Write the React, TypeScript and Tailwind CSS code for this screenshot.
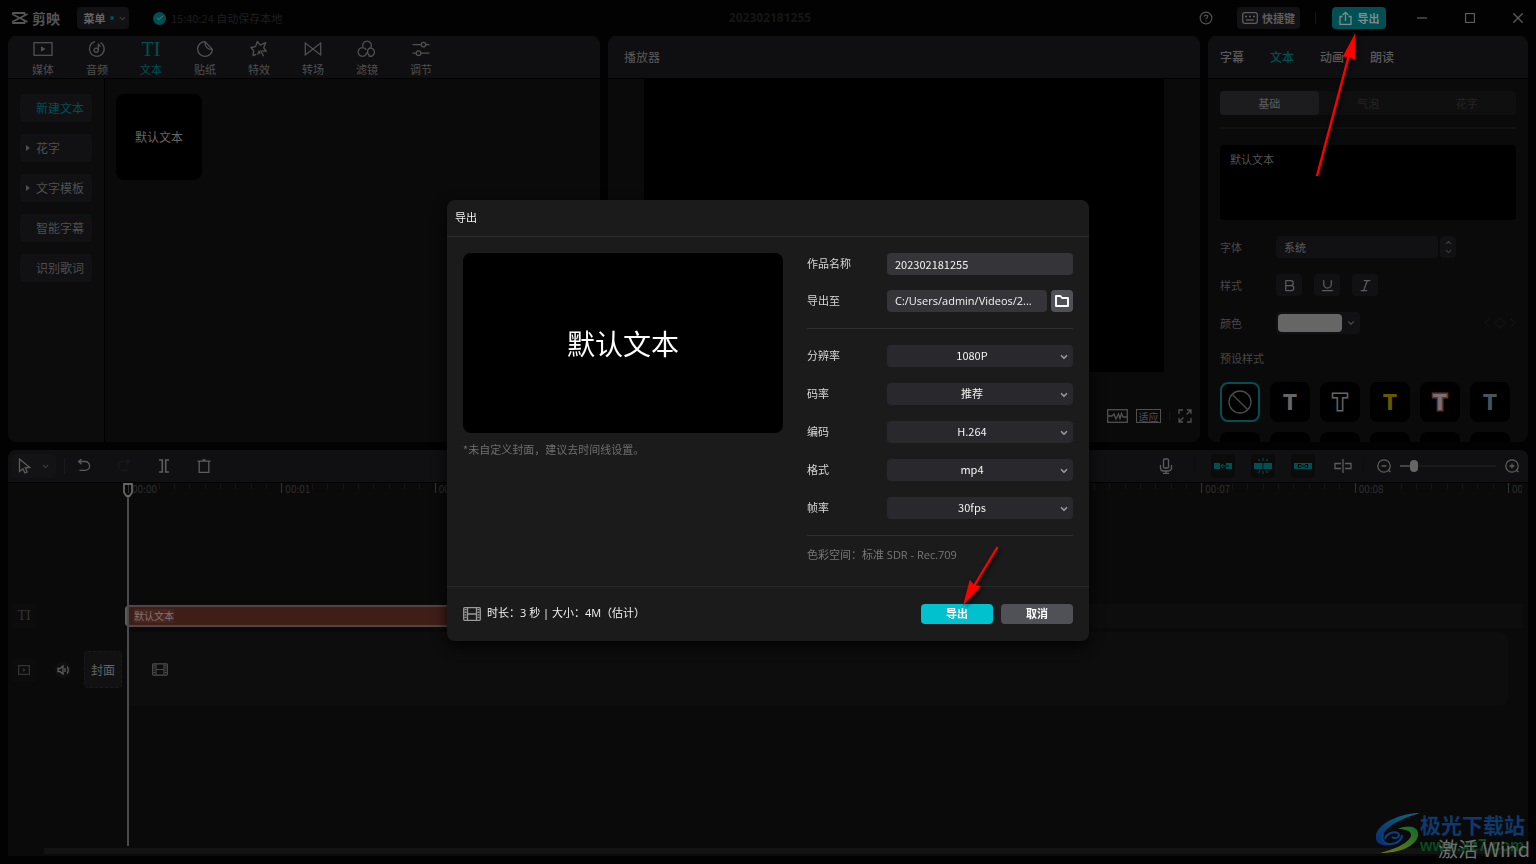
import type { ReactNode } from "react";
import { Bold, Check, ChevronDown, ChevronUp, CircleHelp, Italic, Underline } from "lucide-react";
import { clsx } from "clsx";

const SECOND_WIDTH = 460 / 3;
const CLIP_SECONDS = 3;

const mediaTabs = [
  { label: "媒体", icon: <MediaIcon /> },
  { label: "音频", icon: <AudioIcon /> },
  { label: "文本", icon: <TextIcon />, active: true },
  { label: "贴纸", icon: <StickerIcon /> },
  { label: "特效", icon: <EffectIcon /> },
  { label: "转场", icon: <TransitionIcon /> },
  { label: "滤镜", icon: <FilterIcon /> },
  { label: "调节", icon: <AdjustIcon /> },
];

const textCategories = [
  { label: "新建文本", active: true },
  { label: "花字", arrow: true },
  { label: "文字模板", arrow: true },
  { label: "智能字幕" },
  { label: "识别歌词" },
];

const exportOptions = [
  { id: "resolution", label: "分辨率", value: "1080P" },
  { id: "bitrate", label: "码率", value: "推荐" },
  { id: "codec", label: "编码", value: "H.264" },
  { id: "format", label: "格式", value: "mp4" },
  { id: "fps", label: "帧率", value: "30fps" },
];

const presets = [
  "text-[#666]",
  "text-black [-webkit-text-stroke:3px_#666] [paint-order:stroke_fill]",
  "text-[#665800]",
  "text-[#737373] [-webkit-text-stroke:3px_#63302c] [paint-order:stroke_fill]",
  "text-[#46545f]",
];

/* ---------- icons ---------- */

function Icon({ w = 20, h = 18, children }: { w?: number; h?: number; children: ReactNode }) {
  return (
    <svg
      width={w}
      height={h}
      viewBox={`0 0 ${w} ${h}`}
      fill="none"
      stroke="currentColor"
      strokeWidth="1.3"
      aria-hidden="true"
      className="shrink-0"
    >
      {children}
    </svg>
  );
}

function MediaIcon() {
  return (
    <Icon>
      <rect x="1" y="2.7" width="18" height="12.6" />
      <path d="M8 6.2v5.6l4.5-2.8z" fill="currentColor" stroke="none" />
    </Icon>
  );
}

function AudioIcon() {
  return (
    <Icon>
      <path d="M8 1.7A7.4 7.4 0 1 0 13.5 2.5" />
      <circle cx="9.2" cy="10.2" r="2.1" />
      <path d="M11.3 10.2V3.5c.3 1.6 1 2.4 2.4 2.9" />
    </Icon>
  );
}

function TextIcon() {
  return <span className="font-['Liberation_Serif',serif] text-xl leading-[18px]">TI</span>;
}

function StickerIcon() {
  return (
    <Icon>
      <path d="M10 1.6A7.4 7.4 0 1 0 17.4 9.6L10 1.6zM10 1.6c-.3 4.6 2.3 7.6 7.4 8" />
    </Icon>
  );
}

function EffectIcon() {
  return (
    <Icon>
      <path
        d="M7.2 14.3 4 15.6l.7-4.8L2 7.5l4.6-.9L8.3 1.5l2.9 3.7 5.5-2.5-2 5.1 2.6 3.4-4-.2M8.5 14.5l1.8-3.8M11.6 10.2l3 6M10 10.6l1 3.4"
        strokeLinejoin="round"
      />
    </Icon>
  );
}

function TransitionIcon() {
  return (
    <Icon>
      <path d="M2.3 3v12L17.7 3v12z" />
    </Icon>
  );
}

function FilterIcon() {
  return (
    <Icon>
      <path d="M6.1 7.6A4.4 4.4 0 1 1 14 7.4M9.7 12.7a4.3 4.3 0 1 1-3.2-4.9c1.2.3 2.1 1 2.7 2M13 8a4.2 4.2 0 1 1-1.5 8M13.5 7.8c-1.6.3-2.8 1.5-3 3.5-.1 2 1 3.7 2.6 4.3" />
    </Icon>
  );
}

function AdjustIcon() {
  return (
    <Icon>
      <path d="M1.5 4.6H10M15 4.6h3.5M1.5 13.2H5M10 13.2h8.5" />
      <circle cx="12.5" cy="4.6" r="2.3" />
      <circle cx="7.5" cy="13.2" r="2.3" />
    </Icon>
  );
}

function Logo() {
  return (
    <svg
      width="16"
      height="12"
      viewBox="0 0 16 12"
      fill="none"
      stroke="currentColor"
      strokeWidth="1.8"
      strokeLinejoin="round"
      aria-hidden="true"
    >
      <path d="M12.6 3.400V1H1v1.500L15.600 10" />
      <path d="M12.600 8.600V11H1V9.500L15.600 2" />
    </svg>
  );
}

function FilmIcon({ w = 18, h = 14 }: { w?: number; h?: number }) {
  return (
    <svg width={w} height={h} viewBox="0 0 18 14" fill="none" stroke="currentColor" aria-hidden="true">
      <rect x=".7" y=".7" width="16.6" height="12.6" rx="1" strokeWidth="1.3" />
      <path d="M4.5 1v12M13.5 1v12M4.5 7h9" strokeWidth="1.3" />
      <path d="M2.5 2v10M15.5 2v10" strokeWidth="2" strokeDasharray="1.3 1.3" />
    </svg>
  );
}

function TrackLinkIcon({ kind }: { kind: "main" | "snap" | "link" }) {
  return (
    <svg width="20" height="18" viewBox="0 0 20 18" fill="none" stroke="currentColor" aria-hidden="true">
      {kind === "main" && (
        <>
          <path d="M1 6h6v6H1zM13 6h6v6h-6z" fill="currentColor" stroke="none" />
          <path d="M10 7 8.2 9l1.8 2M10 9h3" strokeWidth="1.2" />
          <path d="M13 9h3" stroke="#0b0b0c" strokeWidth="1.2" />
        </>
      )}
      {kind === "snap" && (
        <>
          <path d="M1 6h8v6H1zM11 6h8v6h-8z" fill="currentColor" stroke="none" />
          <path d="M10 6v6M10 1v3M10 14v3M5.5 2l1.3 2.3M14.5 2l-1.3 2.3M5.5 16l1.3-2.3M14.5 16l-1.3-2.3" strokeWidth="1.1" />
        </>
      )}
      {kind === "link" && (
        <>
          <path d="M1 6h18v6H1z" fill="currentColor" stroke="none" />
          <path d="M8 7.5H5.5v3H8M12 7.5h2.5v3H12M7.5 9h5" stroke="#08090a" strokeWidth="1.2" />
        </>
      )}
    </svg>
  );
}

/* ---------- title bar ---------- */

function TitleBar() {
  return (
    <header className="grid h-9 shrink-0 grid-cols-[1fr_auto_1fr] items-center">
      <div className="flex items-center pl-3">
        <div className="flex items-center gap-1 text-[#545454]">
          <Logo />
          <span className="text-sm leading-5 font-bold">剪映</span>
        </div>
        <button
          type="button"
          className="ml-[17px] flex h-[22px] w-[52px] items-center justify-center gap-1 rounded bg-[#121214] pl-1 text-[11px] font-bold text-[#666]"
        >
          菜单
          <span className="size-1 shrink-0 rounded-full bg-[#004f53]" />
          <ChevronDown size={9} strokeWidth={3} className="shrink-0 text-[#3c3c3c]" />
        </button>
        <span className="ml-6 flex size-[13px] items-center justify-center rounded-full bg-[#004f53]">
          <Check size={8} strokeWidth={3} className="text-[#777]" />
        </span>
        <span className="ml-[5px] text-[11px] text-[#1f1f1f]">15:40:24 自动保存本地</span>
      </div>

      <h1 className="pl-1 font-['Open_Sans',sans-serif] text-xs font-bold text-[#151515]">202302181255</h1>

      <div className="flex items-center justify-end pr-[13px]">
        <button type="button" aria-label="帮助" className="text-[#555]">
          <CircleHelp size={14} strokeWidth={2} />
        </button>
        <button
          type="button"
          className="ml-6 flex h-[22px] w-[63px] items-center justify-center gap-1 rounded bg-[#121214] text-[11px] font-bold text-[#5c5c5c]"
        >
          <Icon w={16} h={12}>
            <rect x=".7" y=".7" width="14.6" height="10.6" rx="2" />
            <path d="M3 4.5h10" strokeDasharray="2 2" />
            <path d="M4 8h8" />
          </Icon>
          快捷键
        </button>
        <span className="ml-[15px] h-3 w-px bg-[#151515]" />
        <div className="relative ml-4">
          <button
            type="button"
            className="flex h-[22px] w-[54px] items-center justify-center gap-1.5 rounded bg-[#004f53] text-[11px] font-bold text-[#7c8c8c]"
          >
            <Icon w={13} h={14}>
              <path d="M3.5 5.5H1v7.8h11V5.5H9.5M6.5 10V1.5M3.5 4l3-2.7 3 2.7" />
            </Icon>
            导出
          </button>
          {/* pointer to the export button */}
          <svg
            width="56"
            height="150"
            viewBox="0 0 56 150"
            aria-hidden="true"
            className="pointer-events-none absolute top-6 right-6 z-50 drop-shadow-[2px_2px_2px_rgba(0,0,0,0.7)]"
          >
            <path d="M11 145 43 24" stroke="#f00" strokeWidth="2.4" />
            <path d="M49.300 2 49 29 43 26 36.700 25.700z" fill="#f00" />
          </svg>
        </div>
        <div className="ml-[31px] flex items-center gap-[38px] text-[#5c5c5c]">
          <button type="button" aria-label="最小化">
            <Icon w={10} h={10}>
              <path d="M0 5h10" />
            </Icon>
          </button>
          <button type="button" aria-label="最大化">
            <Icon w={10} h={10}>
              <rect x=".5" y=".5" width="9" height="9" />
            </Icon>
          </button>
          <button type="button" aria-label="关闭">
            <Icon w={10} h={10}>
              <path d="m.3.3 9.400 9.400M9.700.3.3 9.700" />
            </Icon>
          </button>
        </div>
      </div>
    </header>
  );
}

/* ---------- upper panels ---------- */

function MediaPanel() {
  return (
    <section className="flex min-w-0 flex-1 flex-col overflow-hidden rounded-lg bg-[#0a0a0a]">
      <nav className="flex h-[43px] shrink-0 border-b border-black bg-[#0f0f11] pl-2">
        {mediaTabs.map((tab) => (
          <button
            key={tab.label}
            type="button"
            className={clsx(
              "flex w-[54px] flex-col items-center gap-[3px] pt-1 text-[11px] leading-4",
              tab.active ? "text-[#004f53]" : "text-[#505050]",
            )}
          >
            {tab.icon}
            {tab.label}
          </button>
        ))}
      </nav>
      <div className="flex flex-1">
        <aside className="flex w-[97px] flex-col gap-3 border-r border-black bg-[#0c0c0d] px-3 pt-[15px]">
          {textCategories.map((item) => (
            <button
              key={item.label}
              type="button"
              className={clsx(
                "flex h-7 w-[72px] items-center rounded bg-[#111113] pl-1.5 text-xs",
                item.active ? "text-[#004f53]" : "text-[#4f4f4f]",
              )}
            >
              <span className="w-2.5">
                {item.arrow && (
                  <svg width="4" height="6" viewBox="0 0 4 6" fill="currentColor" aria-hidden="true">
                    <path d="M0 0v6l4-3z" />
                  </svg>
                )}
              </span>
              {item.label}
            </button>
          ))}
        </aside>
        <div className="flex-1 px-[11px] pt-[15px]">
          <button type="button" className="size-[86px] rounded-lg bg-black text-xs text-[#666]">
            默认文本
          </button>
        </div>
      </div>
    </section>
  );
}

function PlayerPanel() {
  return (
    <section className="flex min-w-0 flex-1 flex-col overflow-hidden rounded-lg bg-[#0a0a0a]">
      <h2 className="flex h-[43px] shrink-0 items-center border-b border-black bg-[#0f0f11] px-4 text-xs text-[#5a5a5a]">
        播放器
      </h2>
      <div className="mx-9 aspect-video bg-black" />
      <div className="mt-auto flex h-[52px] items-center justify-end gap-2 pr-2 text-[#505050]">
        <button type="button" aria-label="示波器">
          <Icon w={21} h={14}>
            <rect x=".7" y=".7" width="19.6" height="12.6" />
            <path d="M1 7h4l2-2 2 5 2.500-5 1.500 4.500 1.500-5 1.500 3.500H20" />
          </Icon>
        </button>
        <button
          type="button"
          className="flex h-3.5 w-[25px] items-center justify-center border border-[#505050] text-[10px]"
        >
          适应
        </button>
        <span className="h-2 w-px bg-[#151515]" />
        <button type="button" aria-label="全屏">
          <Icon w={14} h={14}>
            <path d="M5 1H1v4M9 1h4v4M5 13H1V9M9 13h4V9M8.500 5.500 12.500 1.500M5.500 8.500 1.500 12.500" />
          </Icon>
        </button>
      </div>
    </section>
  );
}

function Row({ label, id, children }: { label: string; id?: string; children: ReactNode }) {
  return (
    <div className="flex h-[22px] shrink-0 items-center">
      <label htmlFor={id} className="w-14 text-[11px] text-[#484848]">
        {label}
      </label>
      {children}
    </div>
  );
}

function InspectorPanel() {
  const styleButton = "flex h-[22px] w-[26px] items-center justify-center rounded bg-[#111113] text-[#5c5c5c]";

  return (
    <section className="flex w-80 shrink-0 flex-col overflow-hidden rounded-lg bg-[#0a0a0a]">
      <nav className="flex h-[43px] shrink-0 items-center gap-[26px] border-b border-black bg-[#0f0f11] px-3 text-xs font-medium text-[#5a5a5a]">
        <button type="button">字幕</button>
        <button type="button" className="text-[#004f53]">
          文本
        </button>
        <button type="button">动画</button>
        <button type="button">朗读</button>
      </nav>
      <div className="flex min-h-0 flex-1 flex-col gap-4 overflow-hidden px-3 pt-3">
        <div className="flex shrink-0 flex-col gap-3 border-b-2 border-[#101011] pb-3">
          <div className="grid h-6 grid-cols-3 rounded bg-[#0f0f10] text-[11px] text-[#252525]">
            <button type="button" className="rounded bg-[#1c1c1e] text-[#5c5c5c]">
              基础
            </button>
            <button type="button">气泡</button>
            <button type="button">花字</button>
          </div>
        </div>
        <textarea
          aria-label="文本内容"
          defaultValue="默认文本"
          className="h-[75px] shrink-0 resize-none rounded bg-black px-2.5 py-1.5 text-[11px] leading-4 text-[#555] outline-none"
        />
        <Row label="字体" id="font">
          <select
            id="font"
            className="h-[22px] w-[162px] appearance-none rounded bg-[#111113] px-2 text-[11px] text-[#5c5c5c]"
          >
            <option>系统</option>
          </select>
          <div className="ml-0.5 flex h-[22px] w-4 flex-col items-center justify-between rounded bg-[#111113] py-0.5 text-[#3c3c3c]">
            <ChevronUp size={9} strokeWidth={3} />
            <ChevronDown size={9} strokeWidth={3} />
          </div>
        </Row>
        <Row label="样式">
          <div className="flex gap-3">
            <button type="button" aria-label="加粗" className={styleButton}>
              <Bold size={15} strokeWidth={2} />
            </button>
            <button type="button" aria-label="下划线" className={styleButton}>
              <Underline size={15} strokeWidth={2} />
            </button>
            <button type="button" aria-label="斜体" className={styleButton}>
              <Italic size={15} strokeWidth={2} />
            </button>
          </div>
        </Row>
        <Row label="颜色">
          <button
            type="button"
            aria-label="选择颜色"
            className="flex h-[22px] w-[84px] items-center gap-1 rounded bg-[#111113] pl-0.5 text-[#454545]"
          >
            <span className="h-[18px] w-16 rounded-sm bg-[#666]" />
            <ChevronDown size={10} strokeWidth={3} />
          </button>
          <span className="ml-auto text-[#121212]">
            <Icon w={32} h={12}>
              <path d="m5 2-4 4 4 4M27 2l4 4-4 4M16 1l5 5-5 5-5-5z" />
            </Icon>
          </span>
        </Row>
        <h3 className="shrink-0 text-[11px] leading-4 text-[#484848]">预设样式</h3>
        <div className="flex flex-wrap gap-2.5">
          <button
            type="button"
            aria-label="无样式"
            className="flex size-10 items-center justify-center rounded-lg border-2 border-[#004f53] bg-black text-[#4c4c4c]"
          >
            <Icon w={24} h={24}>
              <circle cx="12" cy="12" r="11" />
              <path d="m4.200 4.200 15.600 15.600" />
            </Icon>
          </button>
          {presets.map((style) => (
            <button
              key={style}
              type="button"
              className={clsx(
                "size-10 rounded-lg bg-black font-['Inter',sans-serif] text-[22px] leading-10 font-extrabold",
                style,
              )}
            >
              T
            </button>
          ))}
          {Array.from({ length: 6 }, (_, i) => (
            <button key={i} type="button" aria-label="预设" className="size-10 rounded-lg bg-black" />
          ))}
        </div>
      </div>
    </section>
  );
}

/* ---------- timeline ---------- */

function TimelineToolbar() {
  const tool = "flex size-6 items-center justify-center rounded";

  return (
    <div className="flex h-[33px] shrink-0 items-center justify-between border-b border-black bg-[#101012] px-1 text-[#5c5c5c]">
      <div className="flex items-center gap-4">
        <div className="flex h-6 w-11 items-center justify-between rounded bg-[#131315] px-1.5">
          <Icon w={14} h={16}>
            <path d="M1.500 1v12.500l3.400-2.700 2 4.200 2.300-1-2-4.200 4.500-.3z" />
          </Icon>
          <ChevronDown size={9} strokeWidth={3} className="text-[#3c3c3c]" />
        </div>
        <span className="-mr-[9px] -ml-2 h-4 w-px bg-[#1a1a1b]" />
        <button type="button" aria-label="撤销" className={tool}>
          <Icon w={14} h={14}>
            <path d="M2 2.500h6.200a4.300 4.300 0 0 1 0 8.800H2.500M4.500 0 1.700 2.500l2.800 2.700" />
          </Icon>
        </button>
        <button type="button" aria-label="重做" className={clsx(tool, "text-[#19191a]")}>
          <Icon w={14} h={14}>
            <path d="M12 2.500H5.800a4.300 4.300 0 0 0 0 8.800h5.700M9.500 0l2.800 2.500-2.800 2.700" />
          </Icon>
        </button>
        <button type="button" aria-label="分割" className={tool}>
          <Icon w={12} h={14}>
            <path d="M1 1h3.300v12H1M11 1H7.700v12H11" strokeWidth="1.600" />
          </Icon>
        </button>
        <button type="button" aria-label="删除" className={tool}>
          <Icon w={14} h={14}>
            <path d="M.5 2.200h13M2.200 2.200v11.100h9.600V2.200M5.500 1h3" />
          </Icon>
        </button>
      </div>

      <div className="flex items-center gap-4">
        <button type="button" aria-label="录音" className={tool}>
          <Icon w={14} h={16}>
            <rect x="4.500" y="1" width="5" height="9" rx="1" />
            <path d="M1.500 7v3a3 3 0 0 0 3 3h5a3 3 0 0 0 3-3V7M7 13v3M4 15.400h6" />
          </Icon>
        </button>
        <span className="h-4 w-px bg-[#0c0c0d]" />
        <button type="button" aria-label="主轨磁吸" className={clsx(tool, "bg-[#0b0b0c] text-[#004f53]")}>
          <TrackLinkIcon kind="main" />
        </button>
        <button type="button" aria-label="自动吸附" className={clsx(tool, "bg-[#0b0b0c] text-[#004f53]")}>
          <TrackLinkIcon kind="snap" />
        </button>
        <button type="button" aria-label="联动" className={clsx(tool, "bg-[#0b0b0c] text-[#004f53]")}>
          <TrackLinkIcon kind="link" />
        </button>
        <button type="button" aria-label="预览轴" className={tool}>
          <Icon w={18} h={14}>
            <path d="M7 4.500H1v5h6M11 4.500h6v5h-6M9 0v14" />
          </Icon>
        </button>
        <span className="-mx-2 h-4 w-px bg-[#0c0c0d]" />
        <div className="flex items-center gap-1">
          <button type="button" aria-label="缩小" className={tool}>
            <ZoomGlyph />
          </button>
          <input
            type="range"
            aria-label="时间线缩放"
            defaultValue={11}
            className="h-3 w-24 appearance-none bg-[linear-gradient(90deg,#444_0_14%,#19191a_14%)] bg-[length:100%_2px] bg-center bg-no-repeat [&::-webkit-slider-thumb]:h-3 [&::-webkit-slider-thumb]:w-2 [&::-webkit-slider-thumb]:appearance-none [&::-webkit-slider-thumb]:rounded-sm [&::-webkit-slider-thumb]:bg-[#666]"
          />
          <button type="button" aria-label="放大" className={tool}>
            <ZoomGlyph plus />
          </button>
        </div>
      </div>
    </div>
  );
}

function ZoomGlyph({ plus }: { plus?: boolean }) {
  return (
    <Icon w={14} h={14}>
      <circle cx="7" cy="7" r="6.200" />
      <path d={plus ? "M4.500 7h5M7 4.500v5M11 11l2.500 2" : "M4.500 7h5M11 11l2.500 2"} />
    </Icon>
  );
}

function Ruler() {
  return (
    <div className="mr-1.5 flex h-3.5 overflow-x-clip text-[10px] leading-[11px] text-[#2e2e2e]">
      {Array.from({ length: 10 }, (_, second) => (
        <div key={second} className="relative flex shrink-0" style={{ width: SECOND_WIDTH }}>
          {Array.from({ length: 10 }, (_, i) => (
            <span
              key={i}
              className={clsx("flex-1 border-l", i === 0 ? "h-2.5 border-[#333]" : "h-1.5 border-[#151515]")}
            />
          ))}
          <span className="absolute top-0 left-0.5 bg-[#0a0a0a] px-0.5">
            00:{String(second).padStart(2, "0")}
          </span>
        </div>
      ))}
    </div>
  );
}

function Timeline() {
  return (
    <section className="flex min-h-0 flex-1 flex-col overflow-hidden rounded-t-lg bg-[#0a0a0a]">
      <TimelineToolbar />
      <div className="relative flex min-h-0 flex-1">
        <div className="flex w-[120px] shrink-0 flex-col px-1 pt-[121px] text-[#333]">
          <div className="flex size-6 items-center justify-center rounded bg-[#0c0c0c]">
            <span className="font-['Liberation_Serif',serif] text-sm">TI</span>
          </div>
          <div className="mt-[23px] flex h-[37px] items-center">
            <div className="flex size-6 items-center justify-center rounded bg-[#0c0c0c]">
              <Icon w={12} h={10}>
                <rect x=".6" y=".6" width="10.800" height="8.800" />
                <path d="M4.800 3v4l3-2z" fill="currentColor" stroke="none" />
              </Icon>
            </div>
            <button
              type="button"
              aria-label="静音"
              className="ml-[19px] flex size-4 items-center justify-center rounded-full bg-[#101010] text-[#5c5c5c]"
            >
              <Icon w={12} h={10}>
                <path d="M1 3.500h2L6 1v8L3 6.500H1zM8 3v4M10.300 1.500c1 2 1 5 0 7" />
              </Icon>
            </button>
            <button
              type="button"
              className="ml-[13px] h-[37px] w-[38px] rounded border border-dashed border-[#1a1a1a] bg-[#111112] text-xs text-[#666]"
            >
              封面
            </button>
          </div>
        </div>

        <div className="flex min-w-0 flex-1 flex-col">
          <Ruler />
          <div className="mt-[107px] mr-1.5 h-6 bg-[#0d0d0d] py-px">
            <div
              className="relative flex h-[22px] items-center border-y-2 border-[#514544] bg-[#401e18] pl-1.5"
              style={{ width: SECOND_WIDTH * CLIP_SECONDS }}
            >
              {/* trim handle */}
              <span className="absolute -inset-y-px -left-[3px] w-[3px] rounded-l-sm bg-[#5c5c5c]" />
              <span className="bg-[#48261f] text-[10px] leading-[14px] text-[#85746f]">默认文本</span>
            </div>
          </div>
          <div className="mt-1 mr-5 flex h-[74px] items-center rounded-r-lg bg-[#0d0d0d] pl-6 text-[#4c4c4c]">
            <FilmIcon w={16} h={13} />
          </div>
        </div>

        {/* playhead */}
        <div className="pointer-events-none absolute top-0 bottom-2.5 left-[115px] flex w-2.5 flex-col items-center text-[#666]">
          <Icon w={10} h={14}>
            <path d="M1 1h8v8.500L6.500 13h-3L1 9.500z" strokeWidth="1.800" />
          </Icon>
          <span className="w-0.5 flex-1 bg-[#4a4a4a]" />
        </div>
      </div>
      <div className="-mt-2 mb-0.5 ml-9 h-1.5 shrink-0 bg-[#131314]" />
    </section>
  );
}

/* ---------- export dialog ---------- */

function ExportDialog() {
  const field = "h-[22px] min-w-0 flex-1 rounded bg-[#343439] px-2 text-[11px] text-[#f2f2f2] outline-none";

  return (
    <div className="fixed inset-0 z-20 flex items-center justify-center pb-6">
      <div
        role="dialog"
        aria-labelledby="export-title"
        className="relative w-[642px] rounded-lg bg-[#1b1b1b] text-[11px] text-[#d6d6d6] shadow-[0_6px_14px_rgba(0,0,0,0.8)]"
      >
        <h2 id="export-title" className="flex h-[37px] items-center border-b border-[#2b2b2b] px-2 text-[#f2f2f2]">
          导出
        </h2>

        <div className="flex gap-6 p-4">
          <div className="w-80 shrink-0">
            <div className="flex aspect-video items-center justify-center rounded-lg bg-black text-[28px] text-white">
              默认文本
            </div>
            <p className="mt-2 leading-4 text-[#6e6e6e]">*未自定义封面，建议去时间线设置。</p>
          </div>

          <form className="flex min-w-0 flex-1 flex-col gap-4">
            <div className="flex flex-col gap-[15px]">
              <div className="flex items-center">
                <label htmlFor="work-name" className="w-20">
                  作品名称
                </label>
                <input id="work-name" defaultValue="202302181255" className={field} />
              </div>
              <div className="flex items-center">
                <label htmlFor="work-path" className="w-20">
                  导出至
                </label>
                <input
                  id="work-path"
                  readOnly
                  value="C:/Users/admin/Videos/2..."
                  className={clsx(field, "font-['Open_Sans',sans-serif]")}
                />
                <button
                  type="button"
                  aria-label="选择文件夹"
                  className="ml-1 flex size-[22px] items-center justify-center rounded bg-[#505156] text-white"
                >
                  <Icon w={14} h={12}>
                    <path d="M1 1h4.500l1.500 2h6v8H1z" strokeWidth="1.900" strokeLinejoin="round" />
                  </Icon>
                </button>
              </div>
            </div>
            <hr className="border-[#303030]" />
            {exportOptions.map((option) => (
              <div key={option.id} className="flex items-center">
                <label htmlFor={option.id} className="w-20">
                  {option.label}
                </label>
                <div className="relative flex-1">
                  <select
                    id={option.id}
                    className="block h-[22px] w-full appearance-none rounded bg-[#29292d] pr-4 text-center text-[#f2f2f2] [text-align-last:center]"
                  >
                    <option>{option.value}</option>
                  </select>
                  <ChevronDown
                    size={10}
                    strokeWidth={4}
                    className="pointer-events-none absolute top-[7px] right-1 text-[#9a9a9a]"
                  />
                </div>
              </div>
            ))}
            <hr className="border-[#303030]" />
            <p className="-mt-2 pb-1 font-['Open_Sans','Noto_Sans_CJK_SC',sans-serif] leading-[22px] text-[#777]">
              色彩空间：标准 SDR - Rec.709
            </p>
          </form>
        </div>

        <footer className="flex h-[55px] items-center gap-2 border-t border-[#272727] px-4">
          <span className="text-[#9a9a9a]">
            <FilmIcon />
          </span>
          <p className="-ml-0.5 mr-auto font-['Open_Sans','Noto_Sans_CJK_SC',sans-serif] text-[#f2f2f2]">
            时长：3 秒 | 大小：4M（估计）
          </p>
          <button type="button" className="h-5 w-[72px] rounded bg-[#00c1cd] font-bold text-white">
            导出
          </button>
          <button type="button" className="h-5 w-[72px] rounded bg-[#505156] font-bold text-white">
            取消
          </button>
        </footer>

        {/* pointer to the confirm button */}
        <svg
          width="42"
          height="66"
          viewBox="0 0 42 66"
          aria-hidden="true"
          className="pointer-events-none absolute right-[87px] bottom-[33px] drop-shadow-[2px_2px_2px_rgba(0,0,0,0.7)]"
        >
          <path d="M37.500 5 14 44" stroke="#f00" strokeWidth="2.400" />
          <path d="M3 63.500 9.700 38 14.500 43 21 44z" fill="#f00" />
        </svg>
      </div>
    </div>
  );
}

function Watermark() {
  return (
    <div className="pointer-events-none absolute right-0 bottom-0 z-10 flex h-[52px] w-40 overflow-hidden">
      <svg width="44" height="42" viewBox="0 0 44 42" aria-hidden="true" className="shrink-0">
        <defs>
          <linearGradient id="swoosh-blue" x1="1" y1="0" x2="0" y2="1">
            <stop offset="0" stopColor="#0b6a86" />
            <stop offset="1" stopColor="#0a2a6e" />
          </linearGradient>
          <linearGradient id="swoosh-green" x1="1" y1="0" x2="0" y2="1">
            <stop offset="0" stopColor="#0d6b2c" />
            <stop offset="1" stopColor="#7a7a10" />
          </linearGradient>
        </defs>
        <path d="M44 1C22 1-3 14 0 27c1 5 6 7 12 6-5-3-7-7-4-12C13 12 30 5 44 1z" fill="url(#swoosh-blue)" />
        <path
          d="M9 27c2-7 13-9 14-4 0 3-5 4-7 2M7 22c-2 7 2 11 8 10 6 0 11-4 11-9"
          fill="none"
          stroke="#0a3f86"
          strokeWidth="2"
        />
        <path d="M22 17c11-5 22-2 20 7C39 35 23 41 4 41c12-3 28-9 31-17 1-5-6-7-13-7z" fill="url(#swoosh-green)" />
      </svg>
      <div className="relative shrink-0 whitespace-nowrap">
        <p className="text-[21px] leading-6 font-bold text-[#0c3a6e]">极光下载站</p>
        <p className="font-['Liberation_Sans',sans-serif] text-base leading-5 font-bold text-[#0b4a20]">www.xz7.com</p>
        <p className="absolute bottom-0 left-[18px] text-[20px] leading-[30px] text-[#707070]">激活 Wind</p>
      </div>
    </div>
  );
}

export default function App() {
  return (
    <div className="relative flex h-screen flex-col overflow-hidden bg-[#020202] pb-2 font-['Noto_Sans_CJK_SC',sans-serif]">
      <TitleBar />
      <main className="flex min-h-0 flex-1 flex-col gap-2 px-2">
        <div className="flex min-h-0 flex-1 gap-2">
          <MediaPanel />
          <PlayerPanel />
          <InspectorPanel />
        </div>
        <Timeline />
      </main>
      <Watermark />
      <ExportDialog />
    </div>
  );
}
